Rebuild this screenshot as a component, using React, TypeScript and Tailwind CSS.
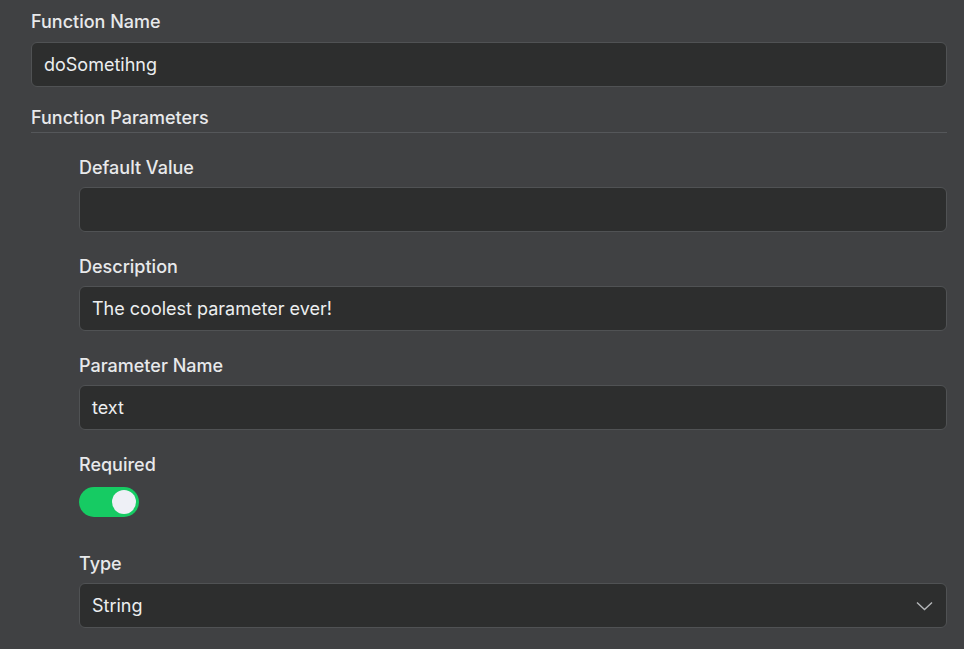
const font = { fontFamily: 'Inter, "Noto Sans", sans-serif' }

function Field({ label, value }: { label: string; value?: string }) {
  return (
    <div className="flex flex-col">
      <label className="h-[20px] mb-[10px] flex items-center text-[18px] font-medium text-[#e8e9eb]">
        {label}
      </label>
      <div className="h-[45px] rounded-[6px] border border-[#505254] bg-[#2d2e2e] px-3 flex items-center text-[18px] text-[#eceef0]">
        {value}
      </div>
    </div>
  )
}

export default function App() {
  return (
    <main className="min-h-screen bg-[#404143] text-[#e8e9eb]" style={font}>
      <div className="pl-[31px] pr-[17px] pt-[11px]">
        <div className="flex flex-col">
          <label className="h-[20px] mb-[11px] flex items-center text-[18px] font-medium">
            Function Name
          </label>
          <div className="h-[45px] rounded-[6px] border border-[#505254] bg-[#2d2e2e] px-3 flex items-center text-[18px] text-[#eceef0]">
            doSometihng
          </div>
        </div>

        <div className="mt-[20px] pb-[5px] border-b border-[#55575a] text-[18px] font-medium h-[20px] flex items-center box-content">
          Function Parameters
        </div>

        {/* Parameter fields */}
        <div className="pl-[48px] pt-[24px] flex flex-col gap-[24px]">
          <Field label="Default Value" />
          <Field label="Description" value="The coolest parameter ever!" />
          <Field label="Parameter Name" value="text" />

          <div className="flex flex-col">
            <label className="h-[20px] mb-[13px] flex items-center text-[18px] font-medium">
              Required
            </label>
            <button className="w-[60px] h-[30px] rounded-full bg-[#16cb63] flex items-center justify-end pr-[3px]">
              <span className="w-[24px] h-[24px] rounded-full bg-[#eef0f6]" />
            </button>
          </div>

          <div className="flex flex-col mt-[12px]">
            <label className="h-[20px] mb-[10px] flex items-center text-[18px] font-medium">
              Type
            </label>
            <div className="h-[45px] rounded-[6px] border border-[#505254] bg-[#2d2e2e] pl-3 pr-[13px] flex items-center justify-between text-[18px] text-[#eceef0]">
              <span>String</span>
              <svg width="17" height="10" viewBox="0 0 17 10" fill="none" className="text-[#b5b7ba]">
                <polyline points="1,1.5 8.5,8.5 16,1.5" stroke="currentColor" strokeWidth="1.4" />
              </svg>
            </div>
          </div>
        </div>
      </div>
    </main>
  )
}
